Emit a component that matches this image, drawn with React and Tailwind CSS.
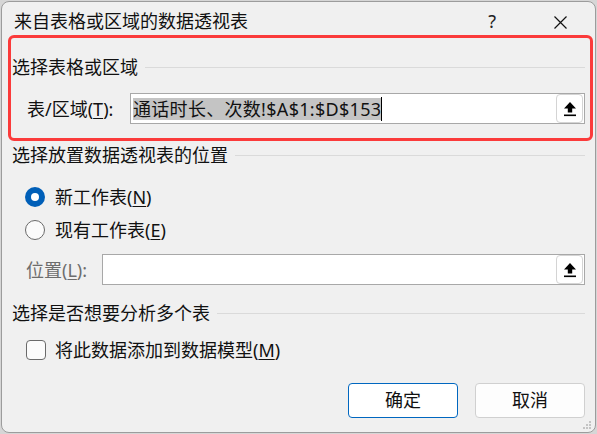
import React from "react";

const font = { fontFamily: '"Noto Sans", "Noto Sans CJK SC", sans-serif' };

const UploadIcon = () => (
  <svg width="14" height="16" viewBox="0 0 14 16">
    <path d="M7 1 L13 7.5 L9.2 7.5 L9.2 11.5 L4.8 11.5 L4.8 7.5 L1 7.5 Z" fill="#000" />
    <rect x="1" y="13.5" width="12" height="1.6" fill="#000" />
  </svg>
);

const PickButton = () => (
  <button className="ml-auto mr-[1px] flex h-[29px] w-[27px] items-center justify-center rounded-[4px] border border-[#d4d4d4] bg-white">
    <UploadIcon />
  </button>
);

const SectionTitle = ({ children, className = "" }) => (
  <div className={`flex h-[18px] items-center ${className}`}>
    <span className="whitespace-nowrap text-[18px] leading-[18px]">{children}</span>
    <div className="ml-[7px] h-px flex-1 bg-[#dadada]" />
  </div>
);

const U = ({ children }) => <span className="underline underline-offset-[2px]">{children}</span>;

export default function App() {
  return (
    <div className="h-[434px] w-[597px] overflow-hidden bg-[#d6d6d6] text-[#111]" style={font}>
      <div className="ml-[1px] mt-[1px] flex h-[432px] w-[595px] flex-col rounded-[8px] border border-[#9c9c9c] bg-[#f0f0f0]">
        {/* title bar */}
        <div className="flex h-[33px] items-start pl-[12px] pt-[10px]">
          <span className="text-[18px] leading-[18px]">来自表格或区域的数据透视表</span>
          <span className="ml-auto mr-[58px] text-[18px] leading-[18px] text-[#222]">?</span>
          <svg className="mr-[28px] mt-[4px]" width="13" height="13" viewBox="0 0 13 13">
            <path d="M0.5 0.5 L12.5 12.5 M12.5 0.5 L0.5 12.5" stroke="#111" strokeWidth="1.2" />
          </svg>
        </div>

        {/* highlighted group */}
        <div className="ml-[6px] mr-[2px] flex h-[106px] flex-col rounded-[6px] border-[3px] border-[#fb3b3b] pl-[1px] pr-[5px] pt-[20px]">
          <SectionTitle>选择表格或区域</SectionTitle>
          <div className="mt-[17px] flex items-center pl-[15px]">
            <span className="text-[18px] leading-[18px]">
              表/区域(<U>T</U>):
            </span>
            <div className="ml-auto flex h-[31px] w-[455px] items-center border border-[#a8a8a8] bg-white pl-[2px]">
              <span className="bg-[#c4c4c4] text-[18px] leading-[22px] tracking-[0.3px] text-[#111]">通话时长、次数!$A$1:$D$153</span>
              <span className="h-[24px] w-px bg-black" />
              <PickButton />
            </div>
          </div>
        </div>

        <div className="flex flex-col pl-[10px] pr-[10px]">
          <SectionTitle className="mt-[5px]">选择放置数据透视表的位置</SectionTitle>

          <div className="mt-[23px] flex h-[20px] items-center pl-[13px]">
            <span className="flex h-[20px] w-[20px] items-center justify-center rounded-full bg-[#005fb8]">
              <span className="h-[8px] w-[8px] rounded-full bg-white" />
            </span>
            <span className="ml-[10px] text-[18px] leading-[18px]">
              新工作表(<U>N</U>)
            </span>
          </div>

          <div className="mt-[13px] flex h-[20px] items-center pl-[13px]">
            <span className="h-[20px] w-[20px] rounded-full border border-[#6a6a6a] bg-[#fbfbfb]" />
            <span className="ml-[10px] text-[18px] leading-[18px]">
              现有工作表(<U>E</U>)
            </span>
          </div>

          <div className="mt-[14px] flex items-center pl-[14px]">
            <span className="text-[18px] leading-[18px] text-[#6d6d6d]">
              位置(<U>L</U>):
            </span>
            <div className="ml-auto flex h-[31px] w-[483px] items-center border border-[#a8a8a8] bg-white">
              <PickButton />
            </div>
          </div>

          <SectionTitle className="mt-[19px]">选择是否想要分析多个表</SectionTitle>

          <div className="mt-[18px] flex h-[20px] items-center pl-[14px]">
            <span className="h-[20px] w-[20px] rounded-[4px] border border-[#6a6a6a] bg-[#fbfbfb]" />
            <span className="ml-[9px] text-[18px] leading-[18px]">
              将此数据添加到数据模型(<U>M</U>)
            </span>
          </div>

          <div className="mt-[23px] flex justify-end gap-[17px]">
            <button className="h-[35px] w-[110px] rounded-[4px] border border-[#0067c0] bg-white text-[18px]">确定</button>
            <button className="h-[35px] w-[110px] rounded-[4px] border border-[#d0d0d0] bg-[#fdfdfd] text-[18px]">取消</button>
          </div>
        </div>
        <div className="mr-[4px] mt-auto mb-[3px] flex justify-end">
          <svg width="8" height="8" viewBox="0 0 8 8">
            <rect x="6" y="0" width="2" height="2" fill="#c4c4c4" />
            <rect x="3" y="3" width="2" height="2" fill="#c4c4c4" />
            <rect x="6" y="3" width="2" height="2" fill="#c4c4c4" />
            <rect x="0" y="6" width="2" height="2" fill="#c4c4c4" />
            <rect x="3" y="6" width="2" height="2" fill="#c4c4c4" />
            <rect x="6" y="6" width="2" height="2" fill="#c4c4c4" />
          </svg>
        </div>
      </div>
    </div>
  );
}
